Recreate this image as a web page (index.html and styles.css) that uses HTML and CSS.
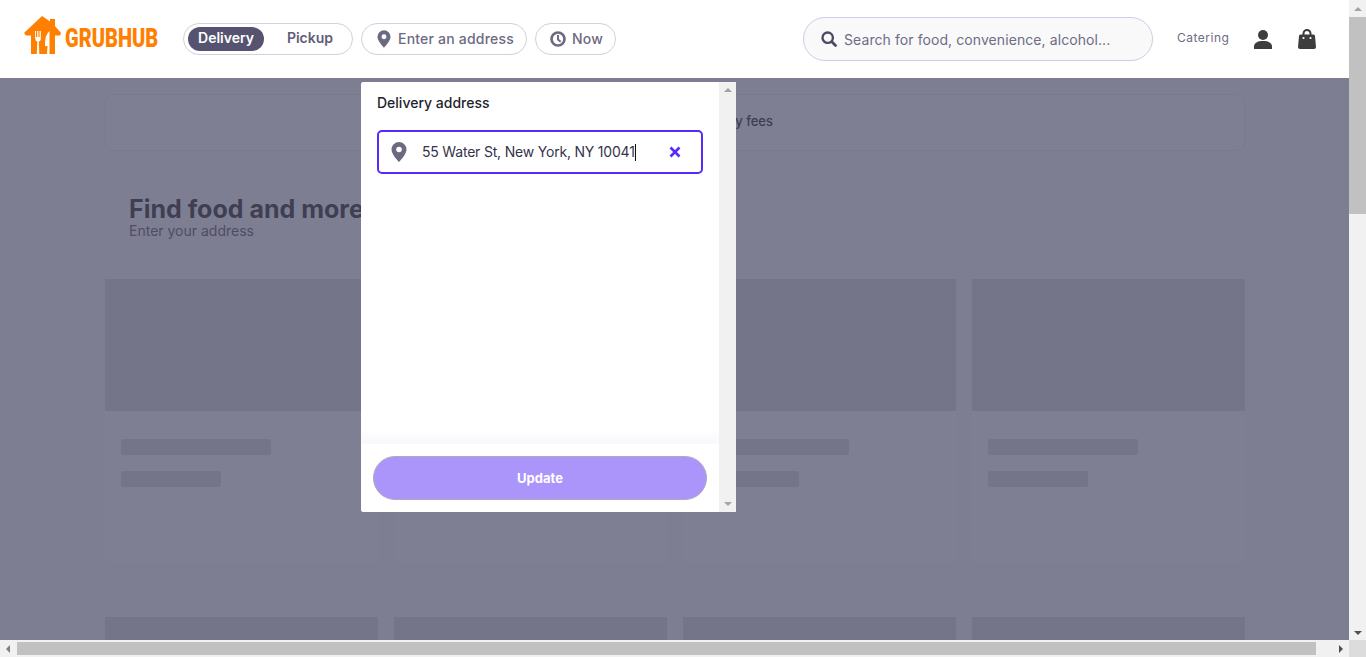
FILE: index.html
```html
<!DOCTYPE html>
<html lang="en">
<head>
<meta charset="utf-8">
<title>Grubhub</title>
<link rel="stylesheet" href="styles.css">
</head>
<body>
<div class="window">
  <div class="page">
    <header class="header">
      <a class="logo">
        <svg class="logo-mark" viewBox="24 16 37 38" width="37" height="38">
          <path fill="#ff8000" d="M42 16l6 4 2 1.500v-2.500h5v7l6 7-1 2.500h-5v18.500H31V35.500h-5L24 33z"/>
          <path fill="#fff" d="M35 31h1v6h1.200v-6h1.200v6h1.200v-6h1.200v8q0 2-2 2.500l.5 12.500h-2.500l.5-12.500q-2-.5-2-2.500z"/>
          <path fill="#fff" d="M49.500 31v23h-2.500l.5-8h-2.500q-.5-11 4.500-15z"/>
        </svg>
        <span class="logo-word"><span class="logo-text">GRUBHUB</span></span>
      </a>
      <div class="mode-pill">
        <span class="mode active">Delivery</span>
        <span class="mode">Pickup</span>
      </div>
      <div class="chip chip-address">
        <svg class="icon" viewBox="0 0 16 20" width="14" height="18"><path fill="#6b6a82" d="M8 0a7.500 7.500 0 0 0-7.500 7.500C.5 12.500 8 20 8 20s7.500-7.500 7.500-12.500A7.500 7.500 0 0 0 8 0zm0 10.300a2.800 2.800 0 1 1 0-5.600 2.800 2.800 0 0 1 0 5.600z"/></svg>
        <span class="chip-label">Enter an address</span>
      </div>
      <div class="chip chip-now">
        <svg class="icon" viewBox="0 0 18 18" width="16" height="16"><circle cx="9" cy="9" r="7.300" fill="none" stroke="#6b6a82" stroke-width="3"/><path fill="none" stroke="#6b6a82" stroke-width="2.200" d="M9 4.500V9.500l3 2.500"/></svg>
        <span class="chip-label">Now</span>
      </div>
      <div class="search">
        <svg class="icon" viewBox="0 0 16 16" width="16" height="16"><circle cx="6.700" cy="6.700" r="5.200" fill="none" stroke="#4c4a63" stroke-width="2.400"/><path stroke="#4c4a63" stroke-width="2.800" stroke-linecap="round" d="M10.800 10.800l3.700 3.700"/></svg>
        <span class="search-text">Search for food, convenience, alcohol...</span>
      </div>
      <span class="catering">Catering</span>
      <svg class="user-icon" viewBox="0 0 18 19" width="18" height="19"><circle cx="9" cy="5" r="5" fill="#3d3d3d"/><path fill="#3d3d3d" d="M0 19v-2.500C0 13 3.500 11 9 11s9 2 9 5.500V19z"/></svg>
      <svg class="bag-icon" viewBox="0 0 18 20" width="18" height="20"><path fill="none" stroke="#3d3d3d" stroke-width="2" d="M5.500 7V4.500a3.500 3.500 0 0 1 7 0V7"/><path fill="#3d3d3d" d="M2.500 5.500h13Q17 5.500 17 7l1 11q0 2-2 2H2q-2 0-2-2L1 7q0-1.500 1.500-1.500z"/><circle cx="5.500" cy="9" r="1.100" fill="#fff"/><circle cx="12.500" cy="9" r="1.100" fill="#fff"/></svg>
    </header>

    <main class="main">
      <div class="content">
        <div class="banner"><span class="banner-text">$0 delivery fees</span></div>
        <div class="intro">
          <h1 class="intro-title">Find food and more</h1>
          <p class="intro-sub">Enter your address</p>
        </div>
        <div class="cards">
          <div class="card"><div class="card-img"></div><div class="card-body"><div class="bar bar-long"></div><div class="bar bar-short"></div></div></div>
          <div class="card"><div class="card-img"></div><div class="card-body"><div class="bar bar-long"></div><div class="bar bar-short"></div></div></div>
          <div class="card"><div class="card-img"></div><div class="card-body"><div class="bar bar-long"></div><div class="bar bar-short"></div></div></div>
          <div class="card"><div class="card-img"></div><div class="card-body"><div class="bar bar-long"></div><div class="bar bar-short"></div></div></div>
          <div class="card"><div class="card-img"></div></div>
          <div class="card"><div class="card-img"></div></div>
          <div class="card"><div class="card-img"></div></div>
          <div class="card"><div class="card-img"></div></div>
        </div>
      </div>

      <section class="modal">
        <div class="modal-main">
          <div class="modal-scroll">
            <h2 class="modal-title">Delivery address</h2>
            <div class="field">
              <svg class="field-pin" viewBox="0 0 16 20" width="16" height="20"><path fill="#6b6a82" d="M8 0a7.500 7.500 0 0 0-7.500 7.500C.5 12.500 8 20 8 20s7.500-7.500 7.500-12.500A7.500 7.500 0 0 0 8 0zm0 10.300a2.800 2.800 0 1 1 0-5.600 2.800 2.800 0 0 1 0 5.600z"/></svg>
              <span class="field-text">55 Water St, New York, NY 10041</span><span class="caret"></span>
              <svg class="field-x" viewBox="0 0 12 12" width="12" height="12"><path stroke="#572af8" stroke-width="2.600" d="M1.500 1.500l9 9M10.500 1.500l-9 9"/></svg>
            </div>
          </div>
          <div class="modal-foot"><div class="update">Update</div></div>
        </div>
        <div class="modal-bar">
          <span class="arrow arrow-up small"></span>
          <span class="arrow arrow-down small"></span>
        </div>
      </section>
    </main>
  </div>

  <div class="vbar">
    <span class="arrow arrow-up"></span>
    <div class="vtrack"><div class="vthumb"></div></div>
    <span class="arrow arrow-down dark"></span>
  </div>
  <div class="hbar">
    <span class="arrow arrow-left"></span>
    <div class="htrack"><div class="hthumb"></div></div>
    <span class="arrow arrow-right"></span>
  </div>
  <div class="corner"></div>
</div>
</body>
</html>
```
FILE: styles.css
```css
* { box-sizing: border-box; }
html, body { margin: 0; height: 100%; overflow: hidden; }
body { font-family: "Inter", "Noto Sans", sans-serif; color: #1f1f2e; background: #fff; }

.window {
  display: grid;
  grid-template-columns: 1349px 17px;
  grid-template-rows: 640px 17px;
  width: 1366px;
  height: 657px;
}

.page { display: flex; flex-direction: column; overflow: hidden; }

/* header */
.header {
  flex: 0 0 78px;
  display: flex;
  align-items: center;
  padding: 0 0 0 24px;
  background: #fff;
}
.logo { display: flex; align-items: flex-start; width: 159px; height: 38px; flex: none; margin-top: -8px; }
.logo-mark { flex: none; }
.logo-word { display: block; width: 94px; margin: 11px 0 0 4px; height: 24px; overflow: visible; }
.logo-text {
  display: inline-block;
  font-family: "Roboto", "Liberation Sans", sans-serif;
  font-weight: 900;
  font-size: 25px;
  line-height: 24px;
  color: #ff8000;
  transform: scaleX(0.8);
  transform-origin: left center;
  white-space: nowrap;
}
.mode-pill {
  display: flex;
  align-items: center;
  width: 170px;
  height: 32px;
  padding: 3px 4px;
  border: 1px solid #d2d1dc;
  border-radius: 16px;
  flex: none;
}
.mode {
  height: 24px;
  line-height: 22px;
  font-size: 14px;
  font-weight: 600;
  color: #5f5d78;
  border-radius: 12px;
  text-align: center;
  width: 76px;
  margin-left: 8px;
}
.mode.active { width: 76px; margin-left: 0; background: #55536f; color: #fff; }
.chip {
  display: flex;
  align-items: center;
  height: 32px;
  border: 1px solid #d2d1dc;
  border-radius: 16px;
  font-size: 14px;
  font-weight: 500;
  color: #6b6a82;
  flex: none;
  white-space: nowrap;
}
.chip-label { margin-bottom: 2px; letter-spacing: 0.2px; }
.chip-address { width: 166px; margin-left: 8px; padding-left: 15px; gap: 7px; }
.chip-now { width: 81px; margin-left: 8px; padding-left: 14px; gap: 6px; }
.icon { flex: none; display: block; }
.search {
  display: flex;
  align-items: center;
  width: 350px;
  height: 44px;
  margin-left: 187px;
  padding-left: 17px;
  gap: 7px;
  background: #f9f9fa;
  border: 1px solid #cfcde4;
  border-radius: 22px;
  flex: none;
}
.search-text { font-size: 14px; letter-spacing: 0.08px; color: #6d6c85; white-space: nowrap; }
.catering { margin-left: 24px; width: 52px; font-size: 12px; letter-spacing: 0.5px; color: #6d6c85; flex: none; margin-top: -3px; white-space: nowrap; }
.user-icon { margin-left: 25px; flex: none; }
.bag-icon { margin-left: 26px; flex: none; }

/* dimmed page */
.main { position: relative; flex: 1; background: #7e7e92; overflow: hidden; }
.content { width: 1140px; margin-left: 105px; padding-top: 16px; }
.banner {
  height: 57px;
  border: 1px solid #7a7a8e;
  border-radius: 8px;
  background: #7f7f93;
  display: flex;
  align-items: center;
  justify-content: flex-end;
  padding-right: 471px;
}
.banner-text { margin-bottom: 3px; font-size: 13px; font-weight: 500; color: #3e3d50; }
.intro { padding: 44px 24px 0; height: 128px; }
.intro-title { margin: 0; font-size: 25px; line-height: 28px; font-weight: 700; color: #3f3e52; white-space: nowrap; }
.intro-sub { margin: -1px 0 0; font-size: 14px; line-height: 17px; color: #4e4c66; }
.cards { display: grid; grid-template-columns: repeat(4, 273px); gap: 54px 16px; }
.card { height: 284px; background: #7f7f93; }
.card-img { height: 132px; background: #757589; }
.card-body { padding: 28px 16px 0; }
.bar { height: 16px; border-radius: 2px; background: #75758a; }
.bar-long { width: 150px; }
.bar-short { width: 100px; margin-top: 16px; }

/* modal */
.modal {
  position: absolute;
  left: 361px;
  top: 4px;
  width: 375px;
  height: 430px;
  display: flex;
  background: #fff;
  border-radius: 3px 0 0 3px;
  overflow: hidden;
}
.modal-main { flex: 1; display: flex; flex-direction: column; min-width: 0; }
.modal-scroll { flex: 1; padding: 13px 16px 0; background: linear-gradient(to bottom, #fff 96%, #f8f8fb 100%); }
.modal-title { margin: 0; font-size: 14px; line-height: 16px; font-weight: 500; color: #1f1f2e; }
.field {
  display: flex;
  align-items: center;
  width: 326px;
  height: 44px;
  margin-top: 19px;
  padding-left: 12px;
  border: 2px solid #572af8;
  border-radius: 5px;
}
.field-pin { flex: none; }
.field-text { margin: 0 0 2px 15px; font-size: 14px; letter-spacing: -0.2px; color: #35344a; white-space: nowrap; }
.caret { width: 1px; height: 17px; background: #111; flex: none; }
.field-x { margin-left: 33px; flex: none; }
.modal-foot { flex: 0 0 68px; padding: 12px; background: #fff; }
.update {
  height: 44px;
  width: 334px;
  border-radius: 22px;
  background: #ab95fb;
  border: 1px solid #b1aabf;
  color: #fff;
  font-size: 13px;
  font-weight: 700;
  line-height: 42px;
  text-align: center;
}
.modal-bar {
  flex: 0 0 17px;
  display: flex;
  flex-direction: column;
  justify-content: space-between;
  align-items: center;
  padding: 6px 0;
  background: #f1f1f1;
}

/* scrollbars */
.vbar { display: flex; flex-direction: column; align-items: center; background: #f1f1f1; }
.vbar .arrow-up { margin: 7px 0 6px; }
.vbar .arrow-down { margin: 6px 0 5px; }
.vtrack { flex: 1; width: 100%; }
.vthumb { width: 100%; height: 197px; background: #c1c1c1; }
.hbar { grid-column: 1; display: flex; align-items: center; background: #f1f1f1; }
.hbar .arrow-left { margin: 0 7px 0 6px; }
.hbar .arrow-right { margin: 0 6px 0 7px; }
.htrack { flex: 1; height: 100%; padding: 2px 0; }
.hthumb { width: 1299px; height: 13px; background: #c1c1c1; }
.corner { background: #dcdcdc; }

.arrow { display: block; width: 0; height: 0; flex: none; border-style: solid; border-color: transparent; }
.arrow-up { border-width: 0 4px 4px; border-bottom-color: #a3a3a3; }
.arrow-down { border-width: 4px 4px 0; border-top-color: #a3a3a3; }
.arrow-down.dark { border-top-color: #505050; }
.arrow-left { border-width: 4px 4px 4px 0; border-right-color: #7e7e7e; }
.arrow-right { border-width: 4px 0 4px 4px; border-left-color: #505050; }
```
